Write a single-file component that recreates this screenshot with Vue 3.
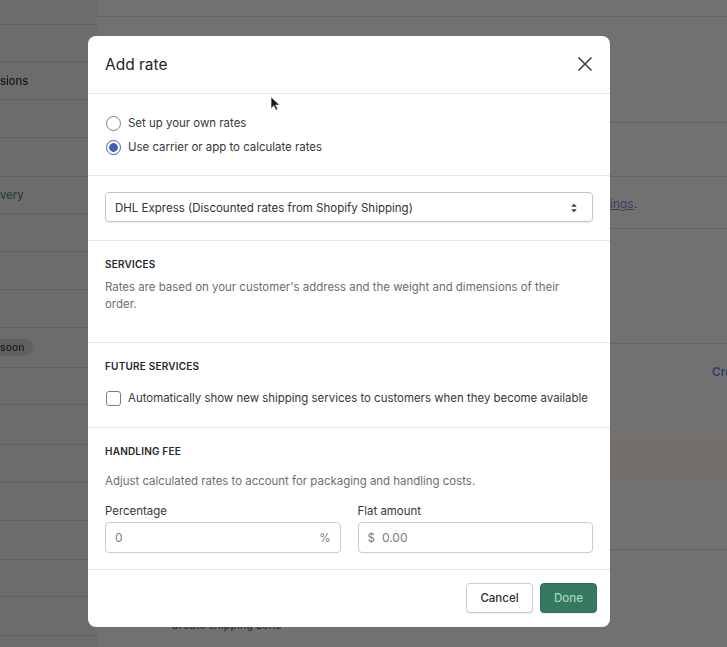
<template>
  <div class="page">
    <!-- dimmed page behind the modal -->
    <div class="backdrop">
      <div class="bg-left">
        <div v-for="(row, i) in leftRows" :key="i" class="bg-row" :class="row.cls">
          <span v-if="row.text" class="bg-text">{{ row.text }}</span>
        </div>
      </div>
      <div class="bg-right">
        <div class="r-block r1"></div>
        <div class="r-block r2"></div>
        <div class="r-block r3"></div>
        <div class="r-block r4"><span class="r-link ings">ings</span><span class="r-dot">.</span></div>
        <div class="r-block r5"></div>
        <div class="r-block r6"><span class="r-link cre">Cre</span></div>
        <div class="r-block r7"></div>
        <div class="r-block r8"></div>
      </div>
      <div class="behind-text">Create shipping zone</div>
    </div>

    <div class="modal">
      <header class="modal-head">
        <h2>Add rate</h2>
        <svg class="close" viewBox="0 0 16 16" width="16" height="16">
          <path d="M1.500 1.500l13 13M14.500 1.500l-13 13" stroke="#3f4144" stroke-width="1.6" fill="none" />
        </svg>
      </header>

      <section class="sec radios">
        <label class="opt"><span class="radio"></span>Set up your own rates</label>
        <label class="opt"><span class="radio on"></span>Use carrier or app to calculate rates</label>
      </section>

      <section class="sec select-sec">
        <div class="select">
          <span>DHL Express (Discounted rates from Shopify Shipping)</span>
          <svg viewBox="0 0 8 12" width="8" height="12">
            <path d="M4 1.500l2.800 3.300H1.200zM4 10.500L1.200 7.200h5.600z" fill="#3f4144" />
          </svg>
        </div>
      </section>

      <section class="sec services">
        <h3>SERVICES</h3>
        <p>Rates are based on your customer's address and the weight and dimensions of their order.</p>
      </section>

      <section class="sec future">
        <h3>FUTURE SERVICES</h3>
        <label class="opt">
          <span class="check"></span>Automatically show new shipping services to customers when they become available
        </label>
      </section>

      <section class="sec handling">
        <h3>HANDLING FEE</h3>
        <p>Adjust calculated rates to account for packaging and handling costs.</p>
        <div class="fields">
          <div class="field">
            <div class="field-label">Percentage</div>
            <div class="input"><span>0</span><span class="suffix">%</span></div>
          </div>
          <div class="field">
            <div class="field-label">Flat amount</div>
            <div class="input start"><span class="prefix">$</span><span>0.00</span></div>
          </div>
        </div>
      </section>

      <footer class="modal-foot">
        <button class="btn">Cancel</button>
        <button class="btn primary">Done</button>
      </footer>
    </div>

    <svg class="cursor" viewBox="0 0 12 18" width="11" height="16">
      <path d="M1 1v13l3.200-3 2.200 5 2-1-2.200-4.800H10.500z" fill="#1a1a1a" stroke="#fff" stroke-width="0.6" />
    </svg>
  </div>
</template>

<script setup>
const leftRows = [
  { cls: 'h25' },
  { cls: 'h37' },
  { cls: 'h38', text: 'sions' },
  { cls: 'h38' },
  { cls: 'h39' },
  { cls: 'h37 green', text: 'very' },
  { cls: 'h38' },
  { cls: 'h38' },
  { cls: 'h38' },
  { cls: 'h40 pill', text: 'soon' },
  { cls: 'h37' },
  { cls: 'h40' },
  { cls: 'h38' },
  { cls: 'h38' },
  { cls: 'h39' },
  { cls: 'h37' },
  { cls: 'h39' },
]
</script>

<style>
html,
body {
  margin: 0;
  background: #707070;
}
</style>

<style scoped>
.page {
  position: relative;
  width: 727px;
  height: 647px;
  overflow: hidden;
  background: #717171;
  font-family: Inter, 'Liberation Sans', sans-serif;
  color: #2c2e31;
}

.backdrop {
  display: flex;
  height: 100%;
  filter: blur(0.5px);
}

.bg-left {
  width: 97px;
  background: #6c6c6c;
  flex: none;
}

.bg-row {
  box-sizing: border-box;
  display: flex;
  align-items: center;
  border-bottom: 1px solid #616161;
  font-size: 11.2px;
  font-weight: 500;
  color: #151515;
}

.h25 { height: 25px; }
.h37 { height: 37px; }
.h38 { height: 38px; }
.h39 { height: 39px; }
.h40 { height: 40px; }

.green {
  color: #24423a;
}

.pill .bg-text {
  background: #606060;
  border-radius: 0 10px 10px 0;
  padding: 2px 8px 2px 0;
  color: #1c1c1c;
  font-size: 10.5px;
}

.bg-right {
  flex: 1;
  display: flex;
  flex-direction: column;
}

.r-block {
  box-sizing: border-box;
  border-bottom: 1px solid #626262;
  position: relative;
}

.r1 { height: 17px; }
.r2 { height: 106px; }
.r3 { height: 54px; }
.r4 { height: 52px; padding: 19px 0 0 513px; font-size: 12px; }
.r5 { height: 115px; }
.r6 { height: 94px; border-bottom-color: #7d6f60; padding: 20px 0 0 615px; font-size: 12px; font-weight: 600; }
.r7 { height: 45px; background: #73706c; border-bottom-color: #7d6f60; }
.r8 { height: 67px; }

.r-link {
  color: #333f5c;
}

.ings {
  text-decoration: underline;
}

.r-dot {
  color: #2b2b2b;
}

.behind-text {
  position: absolute;
  left: 171px;
  top: 618px;
  font-size: 11px;
  color: #2a2a2a;
}

.modal {
  position: absolute;
  left: 88px;
  top: 36px;
  width: 522px;
  height: 591px;
  display: flex;
  flex-direction: column;
  background: #fff;
  border-radius: 8px;
  overflow: hidden;
}

.modal-head {
  box-sizing: border-box;
  height: 58px;
  flex: none;
  display: flex;
  align-items: center;
  justify-content: space-between;
  padding: 0 17px 1px;
  border-bottom: 1px solid #e6e7e8;
}

.modal-head h2 {
  margin: 0;
  font-size: 15.5px;
  font-weight: 400;
  color: #222326;
}

.sec {
  box-sizing: border-box;
  flex: none;
  padding: 0 17px;
  border-bottom: 1px solid #e6e7e8;
}

.radios {
  height: 82px;
  padding-top: 21px;
  display: flex;
  flex-direction: column;
  gap: 8px;
}

.opt {
  display: flex;
  align-items: center;
  gap: 7px;
  height: 16px;
  font-size: 11.45px;
  color: #35373a;
}

.radio {
  box-sizing: border-box;
  width: 15px;
  height: 15px;
  margin-left: 1px;
  border: 1.5px solid #7c7e82;
  border-radius: 50%;
  flex: none;
}

.radio.on {
  border-color: #3f62b0;
  background: radial-gradient(circle, #3f62b0 0 4px, #fff 4.600px);
}

.select-sec {
  height: 65px;
  padding-top: 16px;
}

.select {
  box-sizing: border-box;
  height: 30px;
  display: flex;
  align-items: center;
  justify-content: space-between;
  padding: 1px 14px 0 9px;
  border: 1px solid #c4c6c9;
  border-radius: 4px;
  font-size: 11.5px;
  color: #303235;
  box-shadow: 0 1px 1px rgba(0, 0, 0, 0.08);
}

h3 {
  margin: 0;
  font-size: 10px;
  font-weight: 600;
  letter-spacing: 0.2px;
  color: #26282b;
  line-height: 14px;
}

p {
  margin: 0;
  font-size: 11.45px;
  line-height: 17px;
  color: #6a6d71;
}

.services {
  height: 102px;
  padding-top: 16px;
}

.services p {
  margin-top: 8px;
}

.future {
  height: 85px;
  padding-top: 16px;
}

.future .opt {
  margin-top: 17px;
}

.check {
  box-sizing: border-box;
  width: 15px;
  height: 15px;
  margin-left: 1px;
  border: 1.5px solid #7c7e82;
  border-radius: 3px;
  flex: none;
}

.handling {
  height: 142px;
  padding-top: 16px;
}

.handling p {
  margin-top: 15px;
}

.fields {
  display: grid;
  grid-template-columns: 1fr 1fr;
  gap: 17px;
  margin-top: 14px;
}

.field-label {
  font-size: 11.45px;
  line-height: 14px;
  color: #35373a;
  margin-bottom: 4px;
}

.input {
  box-sizing: border-box;
  height: 31px;
  display: flex;
  align-items: center;
  justify-content: space-between;
  padding: 0 9px;
  border: 1px solid #c9cbcd;
  border-radius: 4px;
  font-size: 12px;
  color: #7a7d81;
}

.input.start {
  justify-content: flex-start;
  gap: 7px;
}

.suffix,
.prefix {
  font-size: 11.500px;
}

.modal-foot {
  flex: 1;
  display: flex;
  align-items: flex-start;
  justify-content: flex-end;
  gap: 7px;
  padding: 13px 13px 0 0;
}

.btn {
  box-sizing: border-box;
  height: 30px;
  padding: 0;
  width: 67px;
  border: 1px solid #c9cbcd;
  border-radius: 4px;
  background: #fff;
  font: 500 11.5px Inter, 'Liberation Sans', sans-serif;
  color: #2c2e31;
  box-shadow: 0 1px 1px rgba(0, 0, 0, 0.08);
}

.btn.primary {
  width: 57px;
  background: #357a5e;
  border-color: #2f6e55;
  color: #a9d5c2;
}

.cursor {
  position: absolute;
  left: 270px;
  top: 96px;
}
</style>
